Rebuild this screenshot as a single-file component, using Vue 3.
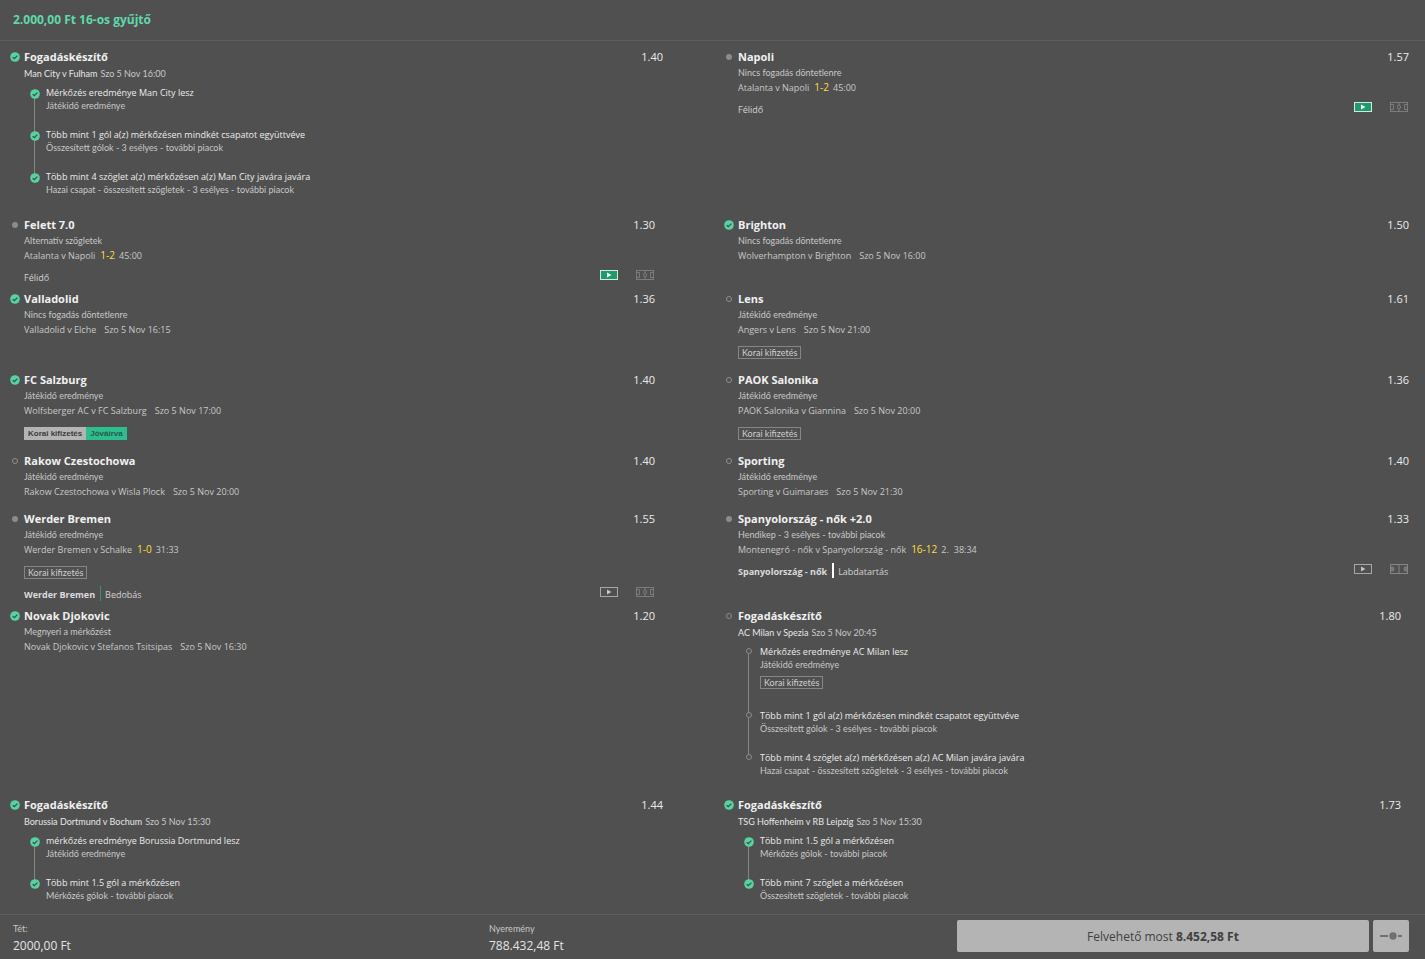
<script setup>
const selections = [
  {
    builder: true, state: 'won', name: 'Fogadáskészítő', odds: '1.40', event: 'Man City v Fulham', time: 'Szo 5 Nov 16:00',
    legs: [
      { name: 'Mérkőzés eredménye Man City lesz', market: 'Játékidő eredménye' },
      { name: 'Több mint 1 gól a(z) mérkőzésen mindkét csapatot együttvéve', market: 'Összesített gólok - 3 esélyes - további piacok' },
      { name: 'Több mint 4 szöglet a(z) mérkőzésen a(z) Man City javára javára', market: 'Hazai csapat - összesített szögletek - 3 esélyes - további piacok' },
    ],
  },
  { state: 'live', name: 'Napoli', odds: '1.57', market: 'Nincs fogadás döntetlenre', event: 'Atalanta v Napoli', score: '1-2', clock: '45:00', status: { label: 'Félidő', video: true } },
  { state: 'live', name: 'Felett 7.0', odds: '1.30', market: 'Alternatív szögletek', event: 'Atalanta v Napoli', score: '1-2', clock: '45:00', status: { label: 'Félidő', video: true } },
  { state: 'won', name: 'Brighton', odds: '1.50', market: 'Nincs fogadás döntetlenre', event: 'Wolverhampton v Brighton', time: 'Szo 5 Nov 16:00' },
  { state: 'won', name: 'Valladolid', odds: '1.36', market: 'Nincs fogadás döntetlenre', event: 'Valladolid v Elche', time: 'Szo 5 Nov 16:15' },
  { state: 'open', name: 'Lens', odds: '1.61', market: 'Játékidő eredménye', event: 'Angers v Lens', time: 'Szo 5 Nov 21:00', badge: 'early' },
  { state: 'won', name: 'FC Salzburg', odds: '1.40', market: 'Játékidő eredménye', event: 'Wolfsberger AC v FC Salzburg', time: 'Szo 5 Nov 17:00', badge: 'paid' },
  { state: 'open', name: 'PAOK Salonika', odds: '1.36', market: 'Játékidő eredménye', event: 'PAOK Salonika v Giannina', time: 'Szo 5 Nov 20:00', badge: 'early' },
  { state: 'open', name: 'Rakow Czestochowa', odds: '1.40', market: 'Játékidő eredménye', event: 'Rakow Czestochowa v Wisla Plock', time: 'Szo 5 Nov 20:00' },
  { state: 'open', name: 'Sporting', odds: '1.40', market: 'Játékidő eredménye', event: 'Sporting v Guimaraes', time: 'Szo 5 Nov 21:30' },
  { state: 'live', name: 'Werder Bremen', odds: '1.55', market: 'Játékidő eredménye', event: 'Werder Bremen v Schalke', score: '1-0', clock: '31:33', badge: 'early', status: { team: 'Werder Bremen', tone: 'green', label: 'Bedobás' } },
  { state: 'live', name: 'Spanyolország - nők +2.0', odds: '1.33', market: 'Hendikep - 3 esélyes - további piacok', event: 'Montenegró - nők v Spanyolország - nők', score: '16-12', period: '2.', clock: '38:34', status: { team: 'Spanyolország - nők', tone: 'white', label: 'Labdatartás', court: true } },
  { state: 'won', name: 'Novak Djokovic', odds: '1.20', market: 'Megnyeri a mérkőzést', event: 'Novak Djokovic v Stefanos Tsitsipas', time: 'Szo 5 Nov 16:30' },
  {
    builder: true, state: 'open', name: 'Fogadáskészítő', odds: '1.80', event: 'AC Milan v Spezia', time: 'Szo 5 Nov 20:45',
    legs: [
      { name: 'Mérkőzés eredménye AC Milan lesz', market: 'Játékidő eredménye', badge: true },
      { name: 'Több mint 1 gól a(z) mérkőzésen mindkét csapatot együttvéve', market: 'Összesített gólok - 3 esélyes - további piacok' },
      { name: 'Több mint 4 szöglet a(z) mérkőzésen a(z) AC Milan javára javára', market: 'Hazai csapat - összesített szögletek - 3 esélyes - további piacok' },
    ],
  },
  {
    builder: true, state: 'won', name: 'Fogadáskészítő', odds: '1.44', event: 'Borussia Dortmund v Bochum', time: 'Szo 5 Nov 15:30',
    legs: [
      { name: 'mérkőzés eredménye Borussia Dortmund lesz', market: 'Játékidő eredménye' },
      { name: 'Több mint 1.5 gól a mérkőzésen', market: 'Mérkőzés gólok - további piacok' },
    ],
  },
  {
    builder: true, state: 'won', name: 'Fogadáskészítő', odds: '1.73', event: 'TSG Hoffenheim v RB Leipzig', time: 'Szo 5 Nov 15:30',
    legs: [
      { name: 'Több mint 1.5 gól a mérkőzésen', market: 'Mérkőzés gólok - további piacok' },
      { name: 'Több mint 7 szöglet a mérkőzésen', market: 'Összesített szögletek - további piacok' },
    ],
  },
]
</script>

<template>
  <main class="bet">
    <header class="head"><h1>2.000,00 Ft 16-os gyűjtő</h1></header>

    <section class="grid">
      <article v-for="(s, i) in selections" :key="i" class="sel" :class="{ builder: s.builder }">
        <div class="title">
          <span class="mark">
            <svg v-if="s.state === 'won'" width="10" height="10" viewBox="0 0 10 10"><circle cx="5" cy="5" r="4.8" fill="#57d3a3" /><path d="M2.7 5.2 4.3 6.7 7.4 3.6" fill="none" stroke="#3f4f49" stroke-width="1.3" /></svg>
            <i v-else class="dot" :class="s.state"></i>
          </span>
          <h2>{{ s.name }}</h2>
          <span class="odds">{{ s.odds }}</span>
        </div>

        <template v-if="s.builder">
          <div class="fixture"><span class="teams">{{ s.event }}</span><span>{{ s.time }}</span></div>
          <ul class="legs">
            <li v-for="leg in s.legs" :key="leg.name" class="leg">
              <span class="leg-mark">
                <svg v-if="s.state === 'won'" class="tick" width="10" height="10" viewBox="0 0 10 10"><circle cx="5" cy="5" r="4.8" fill="#57d3a3" /><path d="M2.7 5.2 4.3 6.7 7.4 3.6" fill="none" stroke="#3f4f49" stroke-width="1.3" /></svg>
                <i v-else class="dot open"></i>
              </span>
              <div class="leg-text">
                <p class="leg-name">{{ leg.name }}</p>
                <p class="leg-market">{{ leg.market }}</p>
                <div v-if="leg.badge" class="badges"><span class="badge">Korai kifizetés</span></div>
              </div>
            </li>
          </ul>
        </template>

        <template v-else>
          <p class="market">{{ s.market }}</p>
          <p class="event">
            <span>{{ s.event }}</span>
            <span v-if="s.time" class="time">{{ s.time }}</span>
            <template v-else>
              <span class="score">{{ s.score }}</span>
              <span v-if="s.period" class="period">{{ s.period }}</span>
              <span>{{ s.clock }}</span>
            </template>
          </p>
          <div v-if="s.badge" class="badges">
            <span v-if="s.badge === 'early'" class="badge">Korai kifizetés</span>
            <template v-else><span class="badge solid">Korai kifizetés</span><span class="badge paid">Jóváírva</span></template>
          </div>
          <div v-if="s.status" class="status">
            <b v-if="s.status.team" :class="s.status.tone">{{ s.status.team }}</b>
            <span>{{ s.status.label }}</span>
            <span class="tools">
              <button type="button" aria-label="Élő közvetítés">
                <svg width="18" height="10" viewBox="0 0 18 10">
                  <rect x=".5" y=".5" width="17" height="9" :fill="s.status.video ? '#1d9b6c' : 'none'" :stroke="s.status.video ? '#d5e8df' : '#a6a6a6'" />
                  <path d="M7 2.5v5L11.500 5z" :fill="s.status.video ? '#fff' : '#c4c4c4'" />
                </svg>
              </button>
              <button type="button" aria-label="Mérkőzéskövető">
                <svg v-if="s.status.court" width="18" height="10" viewBox="0 0 18 10" fill="none" stroke="#858585"><rect x=".5" y=".5" width="17" height="9" /><path d="M9 0v10" /><path d="M1 2.500h2.500Q5.500 5 3.500 7.500H1zM17 2.500h-2.500Q12.500 5 14.500 7.500H17z" fill="#777" stroke="none" /></svg>
                <svg v-else width="18" height="10" viewBox="0 0 18 10" fill="none" stroke="#7c7c7c"><rect x=".5" y=".5" width="17" height="9" /><path d="M1 2.500h2.500v5H1M17 2.500h-2.500v5H17M9 0v3M9 7v3" /><ellipse cx="9" cy="5" rx="1.5" ry="2" /></svg>
              </button>
            </span>
          </div>
        </template>
      </article>
    </section>

    <footer class="foot">
      <div class="sum"><span>Tét:</span><strong>2000,00 Ft</strong></div>
      <div class="sum"><span>Nyeremény</span><strong>788.432,48 Ft</strong></div>
      <button type="button" class="cash">Felvehető most <b>8.452,58 Ft</b></button>
      <button type="button" class="partial" aria-label="Részleges kifizetés">
        <svg width="24" height="10" viewBox="0 0 24 10" fill="#707070"><path d="M1 4h8v2H1zM19 4h4v2h-4z" /><circle cx="14" cy="5" r="3.7" /></svg>
      </button>
    </footer>
  </main>
</template>

<style>
body { margin: 0; background: #505050; }
</style>

<style scoped>
.bet { min-height: 100vh; background: #505050; color: #c8c8c8; font: 400 9px/15px "Open Sans", "Noto Sans", sans-serif; }
h1, h2, p, ul { margin: 0; padding: 0; }
button { padding: 0; border: 0; background: none; font: inherit; cursor: pointer; }
svg { display: block; }

.head { height: 40px; display: flex; align-items: center; padding: 0 13px; border-bottom: 1px solid #5f5f5f; }
h1 { font-size: 12px; line-height: 16px; font-weight: 700; color: #5fd9ab; }

.grid { display: grid; grid-template-columns: 645fr 685fr; grid-template-rows: minmax(168px, auto); column-gap: 69px; padding: 0 16px 0 10px; }
.sel { padding: 8px 0 0 14px; min-width: 0; }

.title { display: flex; align-items: center; margin-left: -15px; }
.mark { width: 11px; margin-right: 4px; display: flex; justify-content: center; }
.dot { display: block; box-sizing: border-box; width: 6px; height: 6px; border-radius: 50%; }
.dot.live { background: #8c8c8c; }
.dot.open { border: 1px solid #8c8c8c; }
h2 { flex: 1; font-size: 11px; line-height: 16px; font-weight: 700; color: #f0f0f0; }
.odds { font-size: 11px; line-height: 16px; color: #ebebeb; }
.sel.builder:nth-child(odd) .title { margin-right: -8px; }
.sel.builder:nth-child(even) .title { margin-right: 8px; }

.market, .leg-market, .fixture, .badge { font-family: Lato, "Open Sans", sans-serif; }
.event { display: flex; gap: 4px; padding-bottom: 4px; }
.time { margin-left: 4px; }
.period { margin-right: 1px; }
.score { margin-left: 1px; font-size: 10px; color: #ffdf3b; }

.badges { display: flex; padding: 5px 0; }
.badge { box-sizing: border-box; height: 13px; padding: 0 3px; border: 1px solid #858585; line-height: 11px; color: #cfcfcf; }
.badge.solid, .badge.paid { font: 700 8px/11px "Liberation Sans", sans-serif; color: #3c3c3c; }
.badge.solid { background: #b4b4b4; border-color: #b4b4b4; }
.badge.paid { background: #2ebd8e; border-color: #2ebd8e; color: #28584a; }

.status { display: flex; align-items: flex-start; height: 16px; line-height: 22px; color: #d2d2d2; }
.status b { display: flex; color: #dcdcdc; }
.status b::after { content: ""; width: 1px; height: 15px; margin: 2px 4px 0 5px; background: #3d8f72; }
.status b.white::after { width: 2px; background: #fff; }
.tools { margin: 3px 1px 0 auto; display: flex; gap: 18px; }
.tools button { display: block; }

.fixture { display: flex; gap: 3px; line-height: 18px; }
.teams { color: #e6e6e6; }
.legs { list-style: none; padding: 3px 0 12px; }
.leg { display: flex; gap: 6px; line-height: 13px; }
.leg-mark { position: relative; width: 11px; margin-left: 5px; display: flex; justify-content: center; align-items: flex-start; }
.leg-mark .dot { margin-top: 3px; background: #505050; position: relative; }
.leg-mark .tick { margin-top: 3px; position: relative; }
.leg:not(:last-child) .leg-mark::before { content: ""; position: absolute; left: 5px; top: 9px; bottom: -4px; width: 1px; background: #858585; }
.leg:not(:last-child) .leg-text { padding-bottom: 16px; }
.leg-name { color: #ececec; }
.leg .badges { padding: 5px 0 4px; }

.foot { display: grid; grid-template-columns: 476fr 468fr 412fr 40px; border-top: 1px solid #5f5f5f; padding: 5px 16px 6px 13px; }
.sum { display: flex; flex-direction: column; padding-top: 1px; font-family: Lato, sans-serif; }
.sum strong { font: 400 12px/20px "Open Sans", sans-serif; color: #e4e4e4; }
.cash, .partial { height: 32px; border-radius: 2px; background: #b4b4b4; color: #404040; }
.cash { font-size: 12px; }
.partial { margin-left: 4px; display: flex; align-items: center; justify-content: center; }
</style>
